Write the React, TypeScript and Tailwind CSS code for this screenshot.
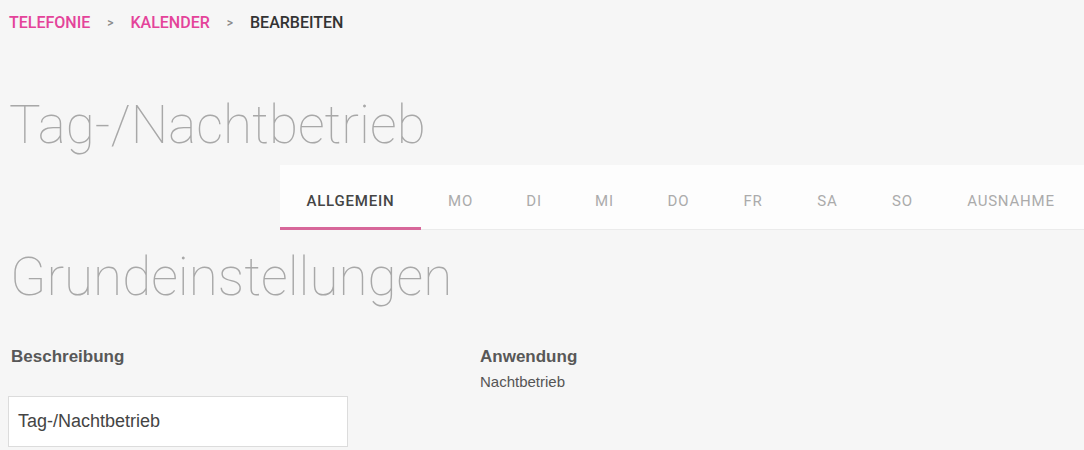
import React from "react";

const tabs: { label: string; w: string; active?: boolean }[] = [
  { label: "ALLGEMEIN", w: "w-[141px]", active: true },
  { label: "MO", w: "w-[79px]" },
  { label: "DI", w: "w-[68px]" },
  { label: "MI", w: "w-[73px]" },
  { label: "DO", w: "w-[75px]" },
  { label: "FR", w: "w-[74px]" },
  { label: "SA", w: "w-[75px]" },
  { label: "SO", w: "w-[75px]" },
  { label: "AUSNAHME", w: "w-[142px]" },
];

export default function App() {
  return (
    <div
      className="w-full h-[450px] overflow-hidden bg-[#f6f6f6]"
      style={{ fontFamily: "Roboto, 'Liberation Sans', sans-serif" }}
    >
      {/* Breadcrumb */}
      <nav className="flex items-center pt-[13px] pl-[9px] h-[33px] text-[16px] leading-[20px] font-medium">
        <span className="text-[#e4439a]">TELEFONIE</span>
        <span className="mx-[17px] text-[12px] text-[#8a8a8a]">&gt;</span>
        <span className="text-[#e4439a]">KALENDER</span>
        <span className="mx-[17px] text-[12px] text-[#8a8a8a]">&gt;</span>
        <span className="text-[#333333]">BEARBEITEN</span>
      </nav>

      {/* Title */}
      <h1 className="mt-[66px] pl-[9px] text-[53px] leading-[53px] font-thin text-[#a8a8a8]">
        Tag-/Nachtbetrieb
      </h1>

      {/* Tabs */}
      <div className="mt-[13px] ml-[280px] h-[65px] flex bg-[#fdfdfd] border-b border-[#ebebeb]">
        {tabs.map((t) => (
          <div
            key={t.label}
            className={`${t.w} shrink-0 flex justify-center pt-[26px] -mb-px border-b-[3px] ${
              t.active ? "border-[#d7679a]" : "border-transparent"
            }`}
          >
            <span
              className={`text-[15px] leading-[20px] tracking-[0.8px] ${
                t.active ? "font-medium text-[#454545]" : "text-[#ababab]"
              }`}
            >
              {t.label}
            </span>
          </div>
        ))}
      </div>

      {/* Section title */}
      <h2 className="mt-[21px] pl-[10px] text-[53px] leading-[53px] font-thin text-[#a8a8a8]">
        Grundeinstellungen
      </h2>

      {/* Form */}
      <div
        className="mt-[43px] pl-[8px] flex"
        style={{ fontFamily: "'Liberation Sans', Arial, sans-serif" }}
      >
        <div className="w-[340px] shrink-0">
          <div className="pl-[3px] text-[17px] leading-[20px] font-bold text-[#585858]">
            Beschreibung
          </div>
          <div className="mt-[29px] h-[51px] bg-white border border-[#dcdcdc] flex items-center pl-[9px] text-[18px] text-[#444444]">
            Tag-/Nachtbetrieb
          </div>
        </div>
        <div className="ml-[132px]">
          <div className="text-[17px] leading-[20px] font-bold text-[#585858]">
            Anwendung
          </div>
          <div className="mt-[6px] text-[15px] leading-[18px] text-[#555555]">
            Nachtbetrieb
          </div>
        </div>
      </div>
    </div>
  );
}
